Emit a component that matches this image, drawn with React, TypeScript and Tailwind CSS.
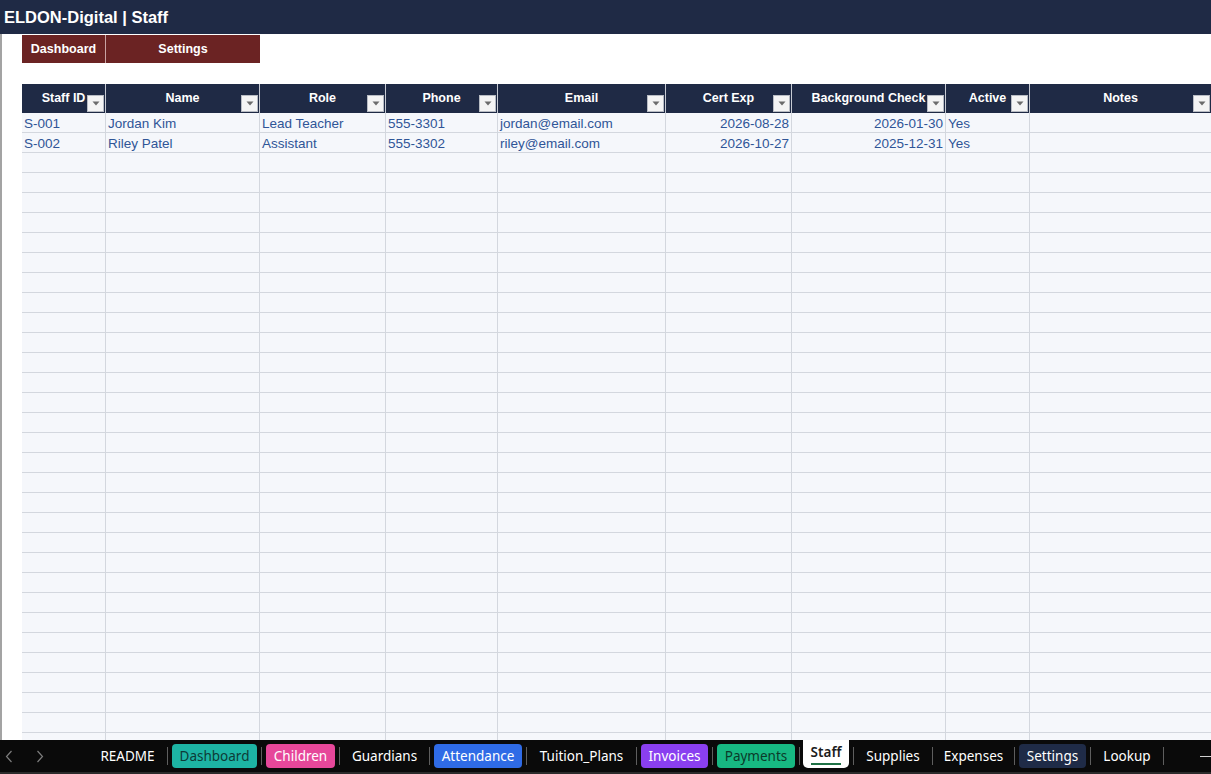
import React from 'react';

type Column = {
  key: string;
  label: string;
  width: string;
  align?: 'left' | 'right';
};

const columns: Column[] = [
  { key: 'id', label: 'Staff ID', width: 'w-[84px]' },
  { key: 'name', label: 'Name', width: 'w-[154px]' },
  { key: 'role', label: 'Role', width: 'w-[126px]' },
  { key: 'phone', label: 'Phone', width: 'w-[112px]' },
  { key: 'email', label: 'Email', width: 'w-[168px]' },
  { key: 'cert', label: 'Cert Exp', width: 'w-[126px]', align: 'right' },
  { key: 'bg', label: 'Background Check', width: 'w-[154px]', align: 'right' },
  { key: 'active', label: 'Active', width: 'w-[84px]' },
  { key: 'notes', label: 'Notes', width: 'flex-1' },
];

const staff: Record<string, string>[] = [
  {
    id: 'S-001',
    name: 'Jordan Kim',
    role: 'Lead Teacher',
    phone: '555-3301',
    email: 'jordan@email.com',
    cert: '2026-08-28',
    bg: '2026-01-30',
    active: 'Yes',
    notes: '',
  },
  {
    id: 'S-002',
    name: 'Riley Patel',
    role: 'Assistant',
    phone: '555-3302',
    email: 'riley@email.com',
    cert: '2026-10-27',
    bg: '2025-12-31',
    active: 'Yes',
    notes: '',
  },
];

const emptyRows = Array.from({ length: 30 }, () => ({}) as Record<string, string>);

type Tab =
  | { kind: 'plain'; label: string; width: string }
  | { kind: 'pill'; label: string; width: string; bg: string; text: string }
  | { kind: 'active'; label: string; width: string };

const tabs: Tab[] = [
  { kind: 'pill', label: 'Dashboard', width: 'w-[85px]', bg: 'bg-[#1db4a4]', text: 'text-[#0d3b37]' },
  { kind: 'pill', label: 'Children', width: 'w-[69px]', bg: 'bg-[#e6479a]', text: 'text-white' },
  { kind: 'plain', label: 'Guardians', width: 'w-[89px]' },
  { kind: 'pill', label: 'Attendance', width: 'w-[88px]', bg: 'bg-[#2f6be6]', text: 'text-white' },
  { kind: 'plain', label: 'Tuition_Plans', width: 'w-[109px]' },
  { kind: 'pill', label: 'Invoices', width: 'w-[67px]', bg: 'bg-[#8a3ff0]', text: 'text-white' },
  { kind: 'pill', label: 'Payments', width: 'w-[78px]', bg: 'bg-[#17b882]', text: 'text-[#0b3a2a]' },
  { kind: 'active', label: 'Staff', width: 'w-[46px]' },
  { kind: 'plain', label: 'Supplies', width: 'w-[78px]' },
  { kind: 'plain', label: 'Expenses', width: 'w-[81px]' },
  { kind: 'pill', label: 'Settings', width: 'w-[67px]', bg: 'bg-[#1f2b47]', text: 'text-white' },
  { kind: 'plain', label: 'Lookup', width: 'w-[72px]' },
];

const FilterButton = () => (
  <span className="absolute bottom-[1px] right-[1px] flex h-[17px] w-[17px] items-center justify-center border border-[#b8bcc4] bg-[#f4f4f4]">
    <svg width="8" height="5" viewBox="0 0 8 5">
      <path d="M0.5 0.5h7L4 4.5z" fill="#6b6b6b" />
    </svg>
  </span>
);

const Separator = () => <span className="h-[18px] w-px shrink-0 bg-[#5e5e5e]" />;

const SheetTabs = () => (
  <div className="flex h-[34px] shrink-0 items-center border-b-2 border-[#2b2b2b] bg-[#0a0a0a] font-['Noto_Sans',sans-serif] text-[13.5px]">
    <div className="flex w-[88px] shrink-0 items-center pl-[5px]">
      <svg width="8" height="13" viewBox="0 0 8 13" className="mr-[23px]">
        <path d="M6.5 1L1.5 6.5L6.5 12" fill="none" stroke="#7d7d7d" strokeWidth="1.2" />
      </svg>
      <svg width="8" height="13" viewBox="0 0 8 13">
        <path d="M1.5 1L6.5 6.5L1.5 12" fill="none" stroke="#7d7d7d" strokeWidth="1.2" />
      </svg>
    </div>
    <span className="w-[79px] shrink-0 text-center text-white">README</span>
    {tabs.map(tab => (
      <React.Fragment key={tab.label}>
        <Separator />
        {tab.kind === 'plain' && (
          <span className={`${tab.width} shrink-0 text-center text-white`}>{tab.label}</span>
        )}
        {tab.kind === 'pill' && (
          <span
            className={`${tab.width} ${tab.bg} ${tab.text} mx-[4px] flex h-[24px] shrink-0 items-center justify-center rounded-[4px]`}
          >
            {tab.label}
          </span>
        )}
        {tab.kind === 'active' && (
          <span
            className={`${tab.width} ml-[3px] mr-[4px] flex h-[28px] shrink-0 flex-col items-center self-start rounded-b-[5px] bg-white pt-[3px] font-semibold text-[#1b1b1b]`}
          >
            <span className="leading-[19px]">{tab.label}</span>
            <span className="mt-[1px] h-[2px] w-[30px] bg-[#1e7145]" />
          </span>
        )}
      </React.Fragment>
    ))}
    <Separator />
    <span className="ml-auto mr-0 h-px w-[11px] bg-[#d0d0d0]" />
  </div>
);

const App = () => {
  const rows = [...staff, ...emptyRows];

  return (
    <div className="flex h-[774px] w-[1211px] flex-col overflow-hidden bg-white font-['Liberation_Sans',Arial,sans-serif]">
      <div className="flex h-[34px] shrink-0 items-center bg-[#1f2a45] pl-[4px] pt-[1px] text-[16.5px] font-bold text-white">
        ELDON-Digital | Staff
      </div>

      <div className="flex min-h-0 flex-1 flex-col overflow-hidden border-l-2 border-[#a3a3a3] pl-[20px]">
        <div className="mt-[1px] flex h-[28px] shrink-0 text-[12.5px] font-bold text-white">
          <div className="flex w-[84px] items-center justify-center border-r border-[#c9a3a3] bg-[#6b2323]">
            Dashboard
          </div>
          <div className="flex w-[154px] items-center justify-center bg-[#6b2323]">Settings</div>
        </div>

        <div className="h-[21px] shrink-0" />

        <div className="flex h-[29px] shrink-0 bg-[#1f2a45] text-[12.5px] font-bold text-white">
          {columns.map((col, i) => (
            <div
              key={col.key}
              className={`${col.width} relative flex items-center justify-center pb-[1px] ${i < columns.length - 1 ? 'border-r border-[#c6cad3]' : ''}`}
            >
              {col.label}
              <FilterButton />
            </div>
          ))}
        </div>

        <div className="flex flex-col bg-[#f5f7fb] text-[13.5px] text-[#2f5597]">
          {rows.map((row, r) => (
            <div key={r} className="flex h-[20px] shrink-0 border-b border-[#d3d7de]">
              {columns.map((col, i) => (
                <div
                  key={col.key}
                  className={`${col.width} flex items-end overflow-hidden whitespace-nowrap px-[2px] leading-[17px] ${col.align === 'right' ? 'justify-end' : ''} ${i < columns.length - 1 ? 'border-r border-[#d3d7de]' : ''}`}
                >
                  {row[col.key] ?? ''}
                </div>
              ))}
            </div>
          ))}
        </div>
      </div>

      <SheetTabs />
    </div>
  );
};

export default App;
